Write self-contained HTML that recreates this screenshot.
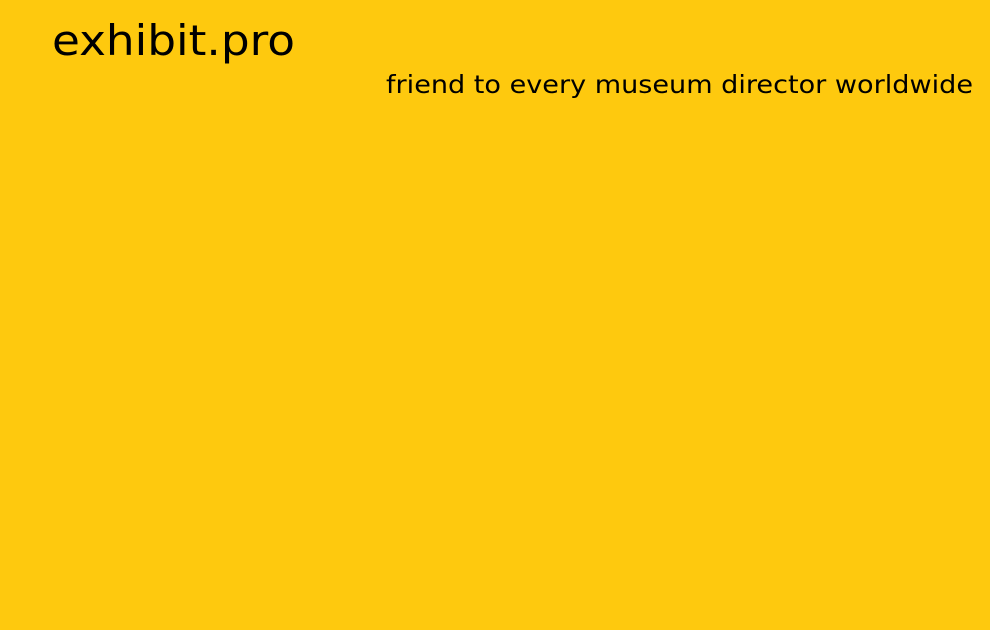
<!DOCTYPE html>
<html><head><meta charset="utf-8"><style>
html,body{margin:0;padding:0;width:990px;height:630px;background:#FEC90E;overflow:hidden}
svg{display:block}
text{font-family:"DejaVu Sans","Liberation Sans",sans-serif;fill:#000}
</style></head><body>
<svg width="990" height="630" viewBox="0 0 990 630">
<text x="52" y="55" font-size="42" textLength="243" lengthAdjust="spacingAndGlyphs">exhibit.pro</text>
<text x="386" y="93" font-size="25" textLength="587" lengthAdjust="spacingAndGlyphs">friend to every museum director worldwide</text>
</svg>
</body></html>
